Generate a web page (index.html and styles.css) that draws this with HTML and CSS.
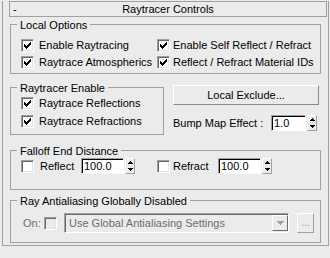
FILE: index.html
```html
<!DOCTYPE html>
<html>
<head>
<meta charset="utf-8">
<link rel="stylesheet" href="styles.css">
</head>
<body>
<div class="frame">
  <div class="title"><span class="minus">-</span><span class="ttext">Raytracer Controls</span><span></span></div>

  <div class="group local">
    <div class="legend">Local Options</div>
    <div class="grid">
      <label class="check"><span class="cb on"><svg width="7" height="7" viewBox="0 0 7 7"><path d="M0 2h1v3H0zM1 3h1v3H1zM2 4h1v3H2zM3 3h1v3H3zM4 2h1v3H4zM5 1h1v3H5zM6 0h1v3H6z"/></svg></span><span>Enable Raytracing</span></label>
      <label class="check"><span class="cb on"><svg width="7" height="7" viewBox="0 0 7 7"><path d="M0 2h1v3H0zM1 3h1v3H1zM2 4h1v3H2zM3 3h1v3H3zM4 2h1v3H4zM5 1h1v3H5zM6 0h1v3H6z"/></svg></span><span class="t2">Enable Self Reflect / Refract</span></label>
      <label class="check"><span class="cb on"><svg width="7" height="7" viewBox="0 0 7 7"><path d="M0 2h1v3H0zM1 3h1v3H1zM2 4h1v3H2zM3 3h1v3H3zM4 2h1v3H4zM5 1h1v3H5zM6 0h1v3H6z"/></svg></span><span>Raytrace Atmospherics</span></label>
      <label class="check"><span class="cb on"><svg width="7" height="7" viewBox="0 0 7 7"><path d="M0 2h1v3H0zM1 3h1v3H1zM2 4h1v3H2zM3 3h1v3H3zM4 2h1v3H4zM5 1h1v3H5zM6 0h1v3H6z"/></svg></span><span class="t2">Reflect / Refract Material IDs</span></label>
    </div>
  </div>

  <div class="middle">
    <div class="group rt">
      <div class="legend">Raytracer Enable</div>
      <div class="rows">
        <label class="check"><span class="cb on"><svg width="7" height="7" viewBox="0 0 7 7"><path d="M0 2h1v3H0zM1 3h1v3H1zM2 4h1v3H2zM3 3h1v3H3zM4 2h1v3H4zM5 1h1v3H5zM6 0h1v3H6z"/></svg></span><span>Raytrace Reflections</span></label>
        <label class="check"><span class="cb on"><svg width="7" height="7" viewBox="0 0 7 7"><path d="M0 2h1v3H0zM1 3h1v3H1zM2 4h1v3H2zM3 3h1v3H3zM4 2h1v3H4zM5 1h1v3H5zM6 0h1v3H6z"/></svg></span><span>Raytrace Refractions</span></label>
      </div>
    </div>
    <div class="right">
      <div class="btn">Local Exclude...</div>
      <div class="bump">
        <span class="blbl">Bump Map Effect :</span>
        <span class="field bfield">1.0</span>
        <span class="spin"><svg width="10" height="16" viewBox="0 0 10 16"><path d="M5 3h1v1H5zM4 4h3v1H4zM3 5h5v1H3zM3 10h5v1H3zM4 11h3v1H4zM5 12h1v1H5z"/></svg></span>
      </div>
    </div>
  </div>

  <div class="group falloff">
    <div class="legend">Falloff End Distance</div>
    <div class="frow">
      <span class="cb"></span><span class="flbl">Reflect</span>
      <span class="field ffield">100.0</span>
      <span class="spin"><svg width="10" height="16" viewBox="0 0 10 16"><path d="M5 3h1v1H5zM4 4h3v1H4zM3 5h5v1H3zM3 10h5v1H3zM4 11h3v1H4zM5 12h1v1H5z"/></svg></span>
      <span class="cb cb2"></span><span class="flbl flbl2">Refract</span>
      <span class="field ffield">100.0</span>
      <span class="spin"><svg width="10" height="16" viewBox="0 0 10 16"><path d="M5 3h1v1H5zM4 4h3v1H4zM3 5h5v1H3zM3 10h5v1H3zM4 11h3v1H4zM5 12h1v1H5z"/></svg></span>
    </div>
  </div>

  <div class="group aa">
    <div class="legend">Ray Antialiasing Globally Disabled</div>
    <div class="aarow">
      <span class="onlbl">On:</span>
      <span class="cb dis"></span>
      <div class="dd"><span>Use Global Antialiasing Settings</span><span class="ddbtn"><svg width="7" height="4" viewBox="0 0 7 4"><path d="M0 0h7v1H0zM1 1h5v1H1zM2 2h3v1H2zM3 3h1v1H3z"/></svg></span></div>
      <div class="dots">...</div>
    </div>
  </div>
</div>
</body>
</html>
```
FILE: styles.css
```css
* { box-sizing: border-box; }
body {
  margin: 0;
  width: 330px;
  height: 258px;
  overflow: hidden;
  background: #ebebeb;
  font: 11px/13px "Liberation Sans", Arial, sans-serif;
  color: #000;
}
.frame {
  margin: 10px 0 0 2px;
  width: 327px;
  height: 245px;
  border: 1px solid #a0a0a0;
  border-top: 0;
}
.title {
  margin: -9px 0 0 6px;
  width: 318px;
  height: 16px;
  border: 1px solid #a0a0a0;
  background: #ebebeb;
  display: grid;
  grid-template-columns: 1fr auto 1fr;
  align-items: center;
  line-height: 14px;
}
.minus { padding-left: 3px; }
.group {
  margin-left: 7px;
  width: 311px;
  border: 1px solid #a0a0a0;
}
.legend {
  display: block;
  width: max-content;
  margin: -6px 0 0 6px;
  padding: 0 3px;
  background: #ebebeb;
  line-height: 13px;
}
.local { margin-top: 7px; height: 50px; }
.local .grid {
  display: grid;
  grid-template-columns: 136px auto;
  grid-auto-rows: 17px;
  margin: 5px 0 0 10px;
}
.check {
  display: flex;
  align-items: center;
  gap: 5px;
  white-space: nowrap;
}
.check .t2 { margin-left: -2px; }
.cb {
  width: 13px;
  height: 13px;
  flex: none;
  background: #fff;
  border: 1px solid;
  border-color: #a0a0a0 #fff #fff #a0a0a0;
  box-shadow: inset 1px 1px 0 #696969, inset -1px -1px 0 #e3e3e3;
  display: flex;
  align-items: center;
  justify-content: center;
}
.cb svg { display: block; }
.cb.dis { background: #ebebeb; }
.middle { display: flex; margin: 11px 0 0 7px; }
.rt { margin: 2px 0 0 0; width: 154px; height: 48px; }
.rt .rows {
  display: grid;
  grid-auto-rows: 17px;
  row-gap: 1px;
  padding-left: 10px;
}
.right { margin-left: 9px; width: 146px; }
.btn {
  height: 20px;
  display: flex;
  align-items: center;
  justify-content: center;
  border: 1px solid;
  border-color: #fff #8a8a8a #8a8a8a #fff;
}
.bump {
  display: flex;
  align-items: center;
  margin-top: 10px;
  height: 16px;
}
.blbl { width: 98px; }
.field {
  height: 16px;
  flex: none;
  background: #fff;
  border: 1px solid;
  border-color: #a0a0a0 #fff #fff #a0a0a0;
  box-shadow: inset 1px 1px 0 #000;
  padding-left: 2px;
  line-height: 14px;
}
.bfield { width: 35px; }
.spin {
  width: 10px;
  height: 16px;
  flex: none;
  margin-left: 1px;
  border: 1px solid;
  border-color: #fff #a0a0a0 #a0a0a0 #fff;
  display: flex;
  align-items: center;
  justify-content: center;
}
.spin svg { display: block; margin: -1px; }
.falloff { margin-top: 15px; height: 40px; }
.frow {
  display: flex;
  align-items: center;
  height: 16px;
  padding-left: 10px;
}
.flbl { width: 41px; margin-left: 6px; }
.flbl2 { width: 45px; margin-left: 3px; }
.ffield { width: 43px; }
.cb2 { margin-left: 22px; }
.aa { margin-top: 10px; height: 43px; }
.aarow {
  display: flex;
  align-items: center;
  margin-top: 5px;
  height: 20px;
  padding-left: 12px;
}
.onlbl { width: 21px; color: #6d6d6d; }
.dd {
  margin-left: 7px;
  width: 225px;
  height: 20px;
  border: 1px solid;
  border-color: #a0a0a0 #fff #fff #a0a0a0;
  box-shadow: inset 1px 1px 0 #696969;
  display: flex;
  align-items: center;
  justify-content: space-between;
  padding-left: 4px;
  color: #6d6d6d;
}
.ddbtn {
  width: 16px;
  height: 16px;
  border: 1px solid;
  border-color: #fff #696969 #696969 #fff;
  display: flex;
  align-items: center;
  justify-content: center;
}
.ddbtn svg { display: block; fill: #a0a0a0; }
.dots {
  margin-left: 8px;
  width: 17px;
  height: 20px;
  border: 1px solid;
  border-color: #fff #a0a0a0 #a0a0a0 #fff;
  color: #a0a0a0;
  text-align: center;
  line-height: 16px;
}
```
